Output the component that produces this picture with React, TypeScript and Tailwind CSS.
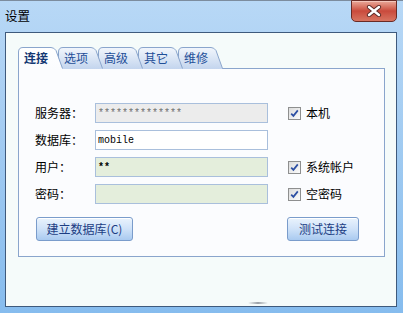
import { type ReactNode } from "react";

const font = { fontFamily: '"Noto Sans CJK SC", "Noto Sans", sans-serif' };

const tabs = ["连接", "选项", "高级", "其它", "维修"];
const tabZ = ["z-[5]", "z-[4]", "z-[3]", "z-[2]", "z-[1]"];

function Tab({ label, active, index }: { label: string; active?: boolean; index: number }) {
  return (
    <div className={`relative -mr-[5px] h-[22px] w-[45px] shrink-0 ${tabZ[index]}`}>
      <svg className="absolute inset-0" width="45" height="22" viewBox="0 0 45 22">
        <defs>
          <linearGradient id={`tg${index}`} x1="0" y1="0" x2="0" y2="1">
            <stop offset="0" stopColor={active ? "#ffffff" : "#f2f6fc"} />
            <stop offset="1" stopColor={active ? "#fbfcfe" : "#c3d5ee"} />
          </linearGradient>
        </defs>
        <path
          d="M0.5,22 V5 Q0.5,0.5 5,0.5 H33 Q36,0.5 38,3.5 L44.5,22 Z"
          fill={`url(#tg${index})`}
          stroke="none"
        />
        <path
          d={active ? "M0.5,22 V5 Q0.5,0.5 5,0.5 H33 Q36,0.5 38,3.5 L44.5,21.5" : "M0.5,21.5 V5 Q0.5,0.5 5,0.5 H33 Q36,0.5 38,3.5 L44.5,21.5"}
          fill="none"
          stroke="#8aa5cc"
        />
      </svg>
      <span
        className={`relative block pl-[6px] pt-[2px] text-[12px] leading-[17px] ${
          active ? "font-bold text-[#143873]" : "text-[#1f4f98]"
        }`}
      >
        {label}
      </span>
    </div>
  );
}

function Checkbox({ label }: { label: string }) {
  return (
    <div className="ml-[20px] flex items-center gap-[5px]">
      <div className="flex h-[13px] w-[13px] items-center justify-center border border-[#8e8f8f] bg-gradient-to-br from-[#dcdcdc] to-[#fbfbfb]">
        <svg width="9" height="9" viewBox="0 0 9 9">
          <path d="M1.2,4.6 L3.4,6.9 L7.8,1.4" fill="none" stroke="#2d4fa3" strokeWidth="1.7" />
        </svg>
      </div>
      <span className="text-[12px] text-black">{label}</span>
    </div>
  );
}

function Field({ bg, children }: { bg: string; children?: ReactNode }) {
  return (
    <div
      className={`flex h-[20px] w-[173px] items-center border border-[#a9bfdc] px-[2px] ${bg}`}
      style={{ fontFamily: '"Liberation Mono", monospace' }}
    >
      {children}
    </div>
  );
}

function Button({ children, w }: { children: ReactNode; w: string }) {
  return (
    <div
      className={`flex h-[24px] ${w} items-center justify-center rounded-[3px] border border-[#7a9ccb] bg-gradient-to-b from-[#eaf3fd] via-[#cfe2f8] to-[#a9caf0] text-[12px] text-[#1c3d83] shadow-[inset_0_1px_0_#ffffff]`}
    >
      {children}
    </div>
  );
}

export default function App() {
  return (
    <div
      className="flex h-[313px] w-[403px] flex-col border-t border-[#7c8c9e] bg-gradient-to-b from-[#b8d8f6] via-[#9fcaf1] to-[#86bcee]"
      style={font}
    >
      {/* title bar */}
      <div className="flex h-[31px] items-start justify-between pl-[5px] pr-[6px]">
        <span className="pt-[7px] text-[12.5px] leading-[16px] text-black">设置</span>
        <div className="-mt-[1px] flex h-[22px] w-[46px] items-center justify-center rounded-b-[5px] border border-[#6a2b25] bg-gradient-to-b from-[#e9a899] via-[#c94a3c] to-[#d77461] shadow-[inset_0_1px_0_#f3c5ba]">
          <svg width="16" height="12" viewBox="0 0 16 12">
            <path d="M3,2 L13,10 M13,2 L3,10" stroke="#5a2a26" strokeWidth="4.2" strokeLinecap="round" />
            <path d="M3,2 L13,10 M13,2 L3,10" stroke="#ffffff" strokeWidth="2.4" strokeLinecap="round" />
          </svg>
        </div>
      </div>

      {/* client area */}
      <div className="ml-[5px] mr-[6px] flex h-[275px] flex-col border border-[#3e5a7c] bg-[#f5fbfa] pl-[12px] pt-[14px]">
        <div className="flex h-[22px]">
          {tabs.map((t, i) => (
            <Tab key={t} label={t} active={i === 0} index={i} />
          ))}
        </div>
        <div className="-mt-[1px] flex h-[189px] w-[367px] flex-col border border-[#8aa5cc] bg-[#fbfcfe] pl-[16px] pt-[34px]">
          <div className="grid grid-cols-[60px_173px_auto] items-center gap-y-[7px] text-[12px] text-black">
            <span>服务器：</span>
            <Field bg="bg-[#ececec]">
              <span className="text-[10px] text-[#6f6f6f]">**************</span>
            </Field>
            <Checkbox label="本机" />

            <span>数据库：</span>
            <Field bg="bg-white">
              <span className="text-[10px] text-black">mobile</span>
            </Field>
            <span />

            <span>用户：</span>
            <Field bg="bg-[#e4eedc]">
              <span className="text-[10px] font-bold text-black">**</span>
            </Field>
            <Checkbox label="系统帐户" />

            <span>密码：</span>
            <Field bg="bg-[#e4eedc]" />
            <Checkbox label="空密码" />
          </div>
          <div className="mt-[13px] flex w-[324px] items-center justify-between pl-[1px]">
            <Button w="w-[97px]">建立数据库(C)</Button>
            <Button w="w-[72px]">测试连接</Button>
          </div>
        </div>
        <div className="mt-auto mb-[2px] ml-[230px] h-[2px] w-[20px] rounded-full bg-gradient-to-r from-transparent via-[#9aa0a6] to-transparent" />
      </div>
    </div>
  );
}
